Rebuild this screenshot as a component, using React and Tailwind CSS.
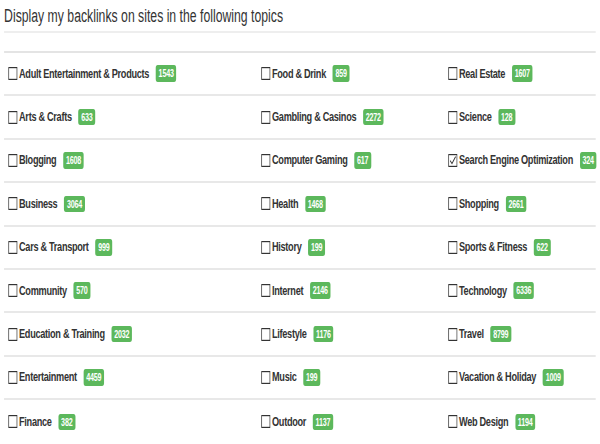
const columns = [
  [
    ['Adult Entertainment & Products', 1543],
    ['Arts & Crafts', 633],
    ['Blogging', 1608],
    ['Business', 3064],
    ['Cars & Transport', 999],
    ['Community', 570],
    ['Education & Training', 2032],
    ['Entertainment', 4459],
    ['Finance', 382],
  ],
  [
    ['Food & Drink', 859],
    ['Gambling & Casinos', 2272],
    ['Computer Gaming', 617],
    ['Health', 1468],
    ['History', 199],
    ['Internet', 2146],
    ['Lifestyle', 1176],
    ['Music', 199],
    ['Outdoor', 1137],
  ],
  [
    ['Real Estate', 1607],
    ['Science', 128],
    ['Search Engine Optimization', 324, true],
    ['Shopping', 2661],
    ['Sports & Fitness', 622],
    ['Technology', 6336],
    ['Travel', 8799],
    ['Vacation & Holiday', 1009],
    ['Web Design', 1194],
  ],
]

function Box({ checked }) {
  return (
    <svg width="14" height="13" viewBox="0 0 14 13" className="mr-[2px] shrink-0">
      <rect x="0.75" y="0.6" width="12.3" height="11.8" fill="white" stroke="#333" strokeWidth="1.2" />
      {checked && <path d="M3 6.6 L5.7 9.6 L11 2.6" fill="none" stroke="#333" strokeWidth="1.3" />}
    </svg>
  )
}

function Topic({ name, count, checked }) {
  return (
    <label className="flex items-center whitespace-nowrap pl-[6px] text-[13.5px] font-bold tracking-[-0.45px] text-[#333]">
      <Box checked={checked} />
      <span>{name}</span>
      <span className="ml-[10px] rounded-[3px] bg-[#5cb85c] px-[4px] py-[3px] text-[10.5px] font-bold leading-none tracking-[-0.3px] text-white">
        {count}
      </span>
    </label>
  )
}

export default function App() {
  return (
    <div className="h-[444px] w-[600px] overflow-hidden bg-white font-['Liberation_Sans',Arial,sans-serif]">
      <div className="w-[882px] origin-top-left scale-x-[0.68] px-[6px]">
        <h2 className="border-b-2 border-[#eeeeee] pt-[6px] pb-[5px] text-[18px] leading-[20px] font-normal text-[#333]">
          Display my backlinks on sites in the following topics
        </h2>
        <div className="h-[20px] border-b-2 border-[#e4e4e4]" />
        {columns[0].map((_, i) => (
          <div
            key={i}
            className="grid h-[43.4px] grid-cols-[372px_275px_1fr] items-center border-b-2 border-[#e8e8e8] last:border-b-0"
          >
            {columns.map((col) => {
              const [name, count, checked] = col[i]
              return <Topic key={name} name={name} count={count} checked={checked} />
            })}
          </div>
        ))}
      </div>
    </div>
  )
}
